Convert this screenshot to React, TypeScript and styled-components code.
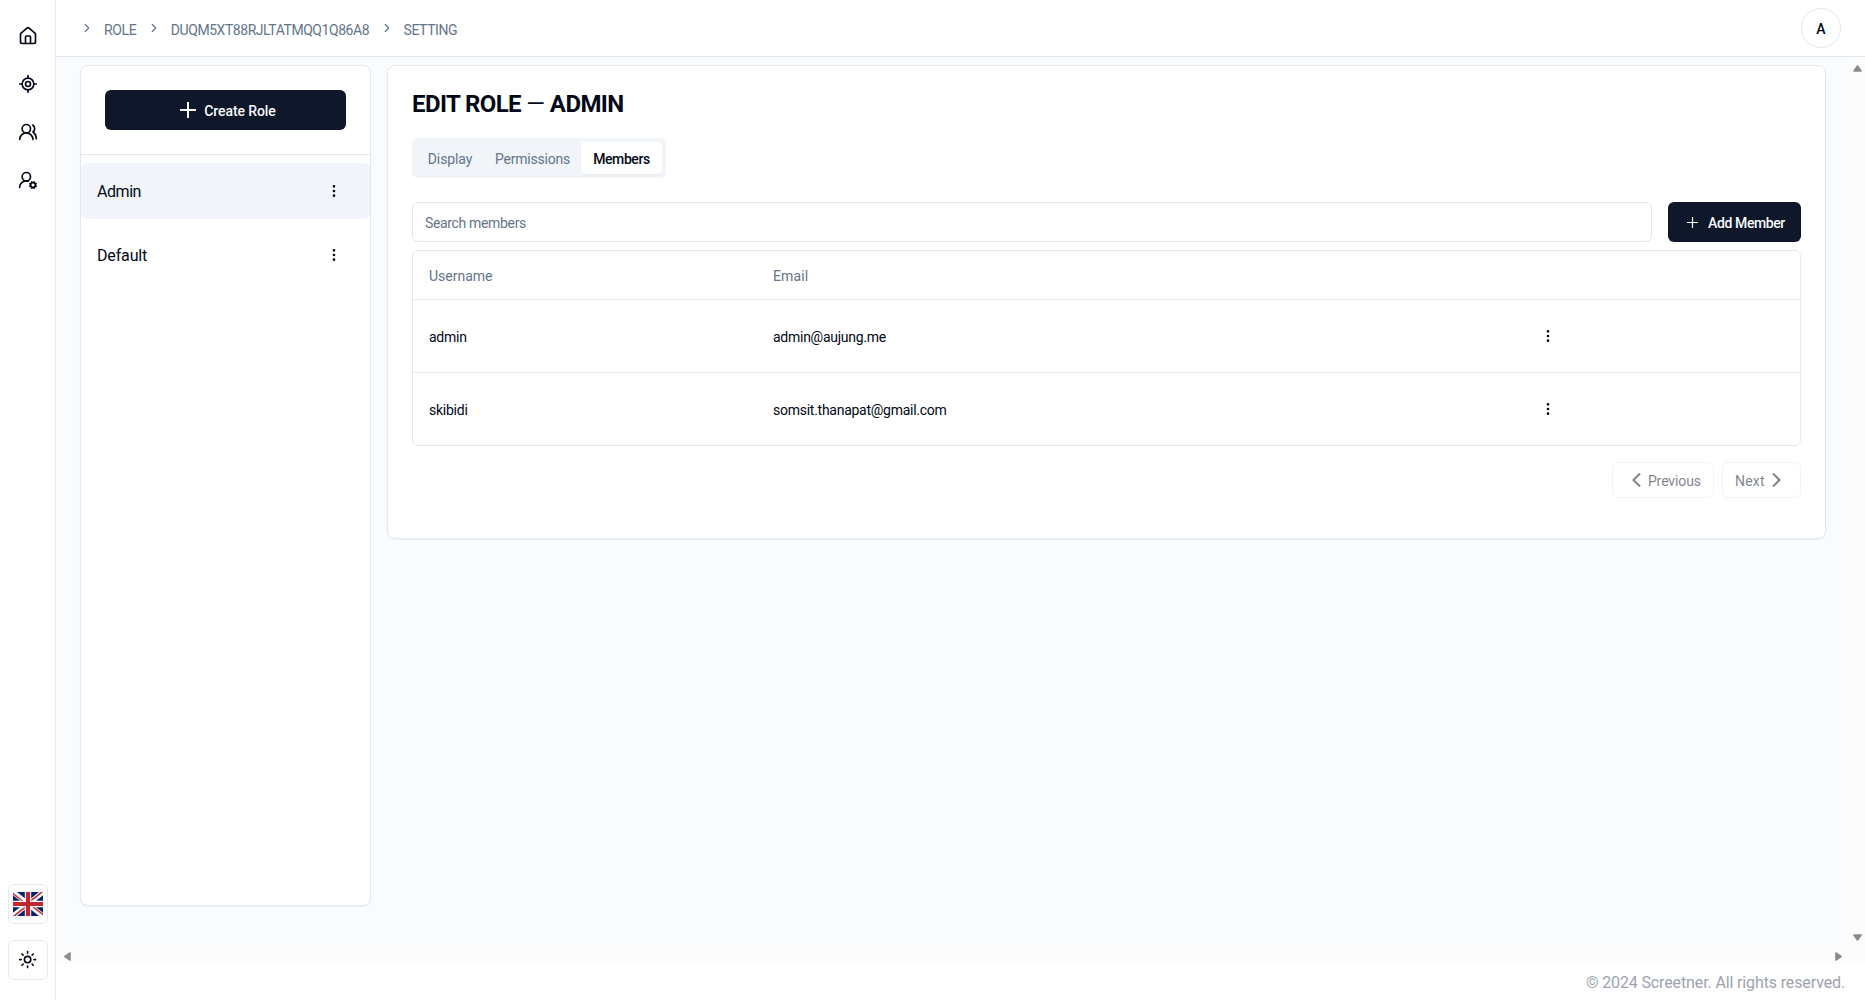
import React from "react";
import styled, { createGlobalStyle } from "styled-components";
import { House, LocateFixed, UsersRound, UserRoundCog, Sun, ChevronRight, EllipsisVertical } from "lucide-react";

const Global = createGlobalStyle`
  *, *::before, *::after { box-sizing: border-box; }
  html, body, #root { height: 100%; }
  body {
    margin: 0;
    overflow: hidden;
    background: #fff;
    color: #020817;
    font-family: Roboto, "Noto Sans", sans-serif;
    font-size: 14px;
    line-height: 20px;
  }
  button { font: inherit; color: inherit; margin: 0; padding: 0; border: 0; background: none; }
`;

const Shell = styled.div`
  display: flex;
  width: 100%;
  height: 1000px;
`;

const Sidebar = styled.aside`
  flex: 0 0 56px;
  display: flex;
  flex-direction: column;
  align-items: center;
  justify-content: space-between;
  padding: 16px 7px 20px 8px;
  border-right: 1px solid #e2e8f0;
`;

const SideGroup = styled.div<{ $gap: number }>`
  display: flex;
  flex-direction: column;
  gap: ${(p) => p.$gap}px;
`;

const NavButton = styled.button`
  display: flex;
  align-items: center;
  justify-content: center;
  width: 40px;
  height: 40px;
`;

const SquareButton = styled(NavButton)`
  border: 1px solid #e2e8f0;
  border-radius: 6px;
`;

const Column = styled.div`
  flex: 1;
  min-width: 0;
  display: flex;
  flex-direction: column;
`;

const Header = styled.header`
  flex: 0 0 57px;
  display: flex;
  align-items: center;
  justify-content: space-between;
  padding: 0 24px;
  border-bottom: 1px solid #e2e8f0;
`;

const Crumbs = styled.nav`
  display: flex;
  align-items: center;
  color: #64748b;
  svg { flex: none; margin: 0 10px 0 0; }
`;

const Label = styled.span<{ $ls?: number; $w?: number; $drop?: number }>`
  padding-top: ${(p) => p.$drop ?? 0}px;
  letter-spacing: ${(p) => p.$ls ?? 0}px;
  font-weight: ${(p) => p.$w ?? 400};
  white-space: nowrap;
`;

const Crumb = styled(Label)`
  margin-right: 10.5px;
  padding-top: 3px;
`;

const Avatar = styled.div`
  display: flex;
  align-items: center;
  justify-content: center;
  width: 40px;
  height: 40px;
  padding-top: 2px;
  border: 1px solid #e2e8f0;
  border-radius: 50%;
`;

const ScrollArea = styled.div`
  flex: 0 0 892px;
  display: flex;
  background: #fafbfd;
`;

const Content = styled.main`
  flex: 1;
  display: flex;
  align-items: flex-start;
  gap: 16px;
  padding: 8px 24px 0;
`;

const Card = styled.section`
  border: 1px solid #e2e8f0;
  border-radius: 8px;
  background: #fff;
  box-shadow: 0 1px 2px rgba(0, 0, 0, 0.05);
`;

const RolesCard = styled(Card)`
  flex: 0 0 291px;
  height: 841px;
`;

const RolesTop = styled.div`
  padding: 24px;
  border-bottom: 1px solid #e2e8f0;
`;

const PrimaryButton = styled.button<{ $width: number; $gap: number; $shift: number }>`
  display: flex;
  align-items: center;
  justify-content: center;
  gap: ${(p) => p.$gap}px;
  width: ${(p) => p.$width}px;
  height: 40px;
  padding-left: ${(p) => p.$shift}px;
  border-radius: 6px;
  background: #0f172a;
  color: #f8fafc;
`;

const RoleList = styled.div`
  display: flex;
  flex-direction: column;
  gap: 8px;
  padding-top: 8px;
`;

const RoleRow = styled.div<{ $active?: boolean }>`
  display: flex;
  align-items: center;
  justify-content: space-between;
  height: 56px;
  padding: 0 28px 0 16px;
  border-radius: 6px;
  font-size: 16px;
  background: ${(p) => (p.$active ? "#f1f5f9" : "transparent")};
`;

const EditCard = styled(Card)`
  flex: 0 0 1439px;
  height: 474px;
  padding: 24px;
`;

const Title = styled.h1`
  margin: 0;
  font-size: 24px;
  line-height: 28px;
  font-weight: 700;
  letter-spacing: -0.6px;
`;

const Dash = styled.span`
  font-weight: 400;
`;

const Tabs = styled.div`
  display: inline-flex;
  height: 40px;
  margin: 20px 0 24px;
  padding: 4px;
  border-radius: 6px;
  background: #f1f5f9;
  color: #64748b;
`;

const Tab = styled.button<{ $active?: boolean; $width: number }>`
  width: ${(p) => p.$width}px;
  height: 32px;
  padding-top: 2px;
  border-radius: 4px;
  ${(p) => p.$active && "background:#fff;color:#020817;box-shadow:0 1px 2px rgba(0,0,0,.05);"}
`;

const SearchRow = styled.div`
  display: flex;
  gap: 16px;
  margin-bottom: 8px;
`;

const SearchBox = styled.div`
  flex: 1;
  height: 40px;
  padding: 10px 12px 8px;
  border: 1px solid #e2e8f0;
  border-radius: 6px;
  color: #64748b;
`;

const Table = styled.div`
  border: 1px solid #e2e8f0;
  border-radius: 6px;
`;

const TableRow = styled.div<{ $height: number; $head?: boolean }>`
  display: grid;
  grid-template-columns: 344px 767px 1fr;
  align-items: center;
  height: ${(p) => p.$height}px;
  padding-left: 16px;
  color: ${(p) => (p.$head ? "#64748b" : "inherit")};
  & + & { border-top: 1px solid #e2e8f0; }
`;

const Cell = styled(Label)`
  padding-top: 2px;
`;

const Pager = styled.div`
  display: flex;
  justify-content: flex-end;
  gap: 8px;
  margin-top: 16px;
`;

const PagerButton = styled.button<{ $width: number; $pad: string }>`
  display: flex;
  align-items: center;
  justify-content: space-between;
  width: ${(p) => p.$width}px;
  height: 36px;
  padding: ${(p) => p.$pad};
  border: 1px solid #e2e8f0;
  border-radius: 6px;
  opacity: 0.5;
`;

const VTrack = styled.div`
  flex: 0 0 15px;
  display: flex;
  flex-direction: column;
  align-items: center;
  justify-content: space-between;
  padding: 8px 0;
  background: #fcfcfc;
`;

const HTrack = styled.div`
  flex: 0 0 15px;
  display: flex;
  align-items: center;
  justify-content: space-between;
  padding: 0 23px 0 8px;
  background: #fcfcfc;
`;

const Footer = styled.footer`
  display: flex;
  justify-content: flex-end;
  padding: 7px 20px 0;
  font-size: 16px;
  line-height: 24px;
  color: #9ca3af;
`;

const Arrow = ({ dir }: { dir: "up" | "down" | "left" | "right" }) => {
  const shapes = {
    up: "M4.5 1 8 6H1Z",
    down: "M4.5 6 8 1H1Z",
    left: "M1 4.5 6 1V8Z",
    right: "M6 4.5 1 1V8Z",
  };
  const flat = dir === "up" || dir === "down";
  return (
    <svg width={flat ? 9 : 7} height={flat ? 7 : 9} fill="#8b8b8b" stroke="#8b8b8b" strokeWidth="1.6" strokeLinejoin="round">
      <path d={shapes[dir]} />
    </svg>
  );
};

const Flag = () => (
  <svg width="30" height="24" viewBox="0 0 30 24">
    <clipPath id="flag-edge"><rect width="30" height="24" rx="1.5" /></clipPath>
    <g clipPath="url(#flag-edge)">
      <path fill="#012169" d="M0 0h30v24H0z" />
      <path stroke="#fff" strokeWidth="5" d="M0 0 30 24M30 0 0 24" />
      <path stroke="#c8353f" strokeWidth="1.6" d="M-.5 1 14.500 13M15 11 29.500 -.5M30.500 23 15 11M15 13 .5 24.500" />
      <path stroke="#fff" strokeWidth="6.400" d="M15 0v24M0 12h30" />
      <path stroke="#c1272d" strokeWidth="4.200" d="M15 0v24M0 12h30" />
    </g>
  </svg>
);

const PlusGlyph = ({ size, weight }: { size: number; weight: number }) => (
  <svg width={size} height={size} viewBox={`0 0 ${size} ${size}`} stroke="currentColor" strokeWidth={weight}>
    <path d={`M${size / 2} 0v${size}M0 ${size / 2}h${size}`} />
  </svg>
);

const PagerChevron = ({ next }: { next?: boolean }) => (
  <svg width="9" height="14" fill="none" stroke="currentColor" strokeWidth="2">
    <path d={next ? "M1 .5l6.500 6.500-6.500 6.500" : "M8 .5L1.500 7l6.500 6.500"} />
  </svg>
);

const members = [
  { name: "admin", email: "admin@aujung.me" },
  { name: "skibidi", email: "somsit.thanapat@gmail.com" },
];

export default function App() {
  return (
    <>
      <Global />
      <Shell>
        <Sidebar>
          <SideGroup $gap={8}>
            <NavButton><House size={20} /></NavButton>
            <NavButton><LocateFixed size={20} /></NavButton>
            <NavButton><UsersRound size={20} /></NavButton>
            <NavButton><UserRoundCog size={20} /></NavButton>
          </SideGroup>
          <SideGroup $gap={16}>
            <SquareButton><Flag /></SquareButton>
            <SquareButton><Sun size={19.2} /></SquareButton>
          </SideGroup>
        </Sidebar>
        <Column>
          <Header>
            <Crumbs>
              <ChevronRight size={14} /><Crumb $ls={-0.35}>ROLE</Crumb>
              <ChevronRight size={14} /><Crumb $ls={-0.45}>DUQM5XT88RJLTATMQQ1Q86A8</Crumb>
              <ChevronRight size={14} /><Crumb $ls={-0.43}>SETTING</Crumb>
            </Crumbs>
            <Avatar><Label $w={500}>A</Label></Avatar>
          </Header>
          <ScrollArea>
            <Content>
              <RolesCard>
                <RolesTop>
                  <PrimaryButton $width={241} $gap={8} $shift={5}>
                    <PlusGlyph size={16} weight={2} /><Label $w={500} $ls={-0.1} $drop={2}>Create Role</Label>
                  </PrimaryButton>
                </RolesTop>
                <RoleList>
                  <RoleRow $active><Label $ls={-0.45} $drop={2}>Admin</Label><EllipsisVertical size={16} /></RoleRow>
                  <RoleRow><Label $ls={-0.15} $drop={2}>Default</Label><EllipsisVertical size={16} /></RoleRow>
                </RoleList>
              </RolesCard>
              <EditCard>
                <Title>EDIT ROLE <Dash>—</Dash> ADMIN</Title>
                <Tabs>
                  <Tab $width={68}><Label $ls={-0.1}>Display</Label></Tab>
                  <Tab $width={97}><Label $ls={-0.2}>Permissions</Label></Tab>
                  <Tab $width={81} $active><Label $w={500} $ls={-0.4}>Members</Label></Tab>
                </Tabs>
                <SearchRow>
                  <SearchBox><Label $ls={-0.34}>Search members</Label></SearchBox>
                  <PrimaryButton $width={133} $gap={10} $shift={3}>
                    <PlusGlyph size={11} weight={1.2} /><Label $w={500} $ls={-0.4} $drop={2}>Add Member</Label>
                  </PrimaryButton>
                </SearchRow>
                <Table>
                  <TableRow $height={48} $head><Cell>Username</Cell><Cell $ls={0.1}>Email</Cell></TableRow>
                  {members.map((m) => (
                    <TableRow key={m.name} $height={73}>
                      <Cell $ls={-0.25}>{m.name}</Cell><Cell $ls={-0.26}>{m.email}</Cell><EllipsisVertical size={16} />
                    </TableRow>
                  ))}
                </Table>
                <Pager>
                  <PagerButton $width={102} $pad="0 12px 0 19px"><PagerChevron /><Label $ls={-0.1} $drop={2}>Previous</Label></PagerButton>
                  <PagerButton $width={79} $pad="0 19px 0 12px"><Label $ls={0.2} $drop={2}>Next</Label><PagerChevron next /></PagerButton>
                </Pager>
              </EditCard>
            </Content>
            <VTrack><Arrow dir="up" /><Arrow dir="down" /></VTrack>
          </ScrollArea>
          <HTrack><Arrow dir="left" /><Arrow dir="right" /></HTrack>
          <Footer><Label $ls={-0.13}>© 2024 Screetner. All rights reserved.</Label></Footer>
        </Column>
      </Shell>
    </>
  );
}
